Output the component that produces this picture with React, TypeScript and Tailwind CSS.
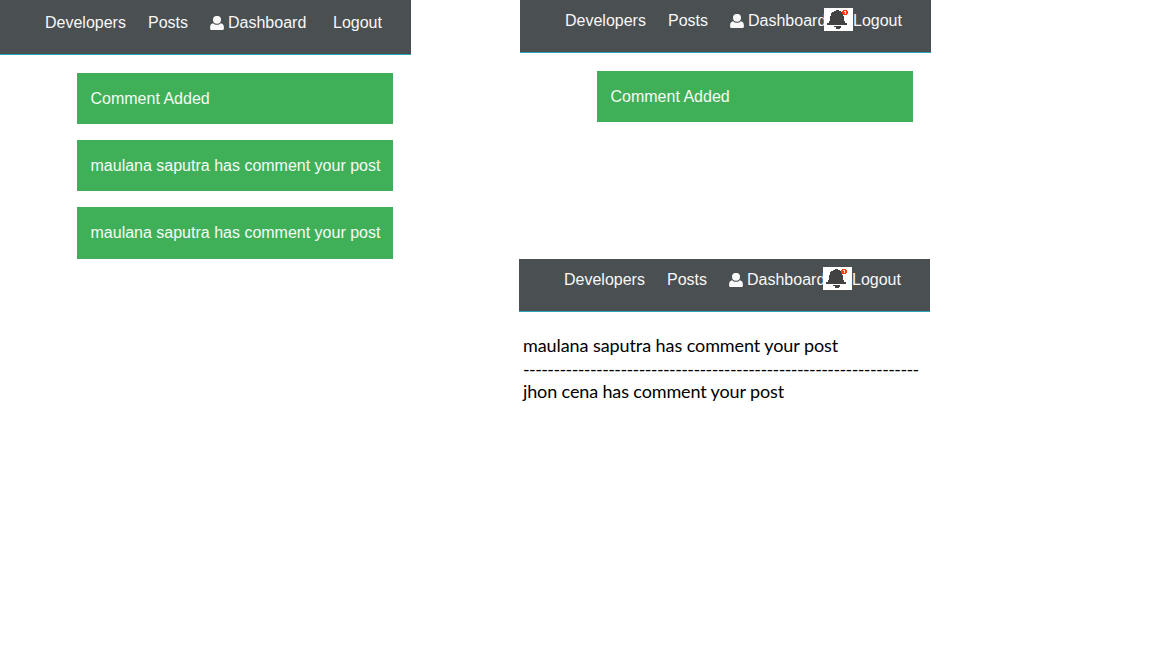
import React from "react";

function UserIcon() {
  return (
    <svg className="mr-1 mb-px h-[14px] w-[14px] shrink-0" viewBox="0 0 14 14" fill="currentColor" aria-hidden="true">
      <ellipse cx="7" cy="3.8" rx="4" ry="3.9" />
      <path d="M3.2 7.2C4.2 8.3 5.5 8.8 7 8.8S9.8 8.3 10.8 7.2C12.8 7.5 13.9 9 13.9 11.2V12.4C13.9 13.4 13.3 14 12.3 14H1.7C.7 14 .1 13.4 .1 12.4V11.2C.1 9 1.2 7.5 3.2 7.2Z" />
    </svg>
  );
}

function BellBadge() {
  return (
    <div className="absolute top-2 left-[304px] h-[23px] w-[29px] bg-white">
      <svg className="block h-[23px] w-[29px]" viewBox="0 0 29 23" shapeRendering="crispEdges" aria-hidden="true">
        <path
          fill="#424242"
          d="M12 2H15V3H17V4H18V5H19V8H20V13H21V15H23V17H3V15H5V13H6V8H7V5H8V4H10V3H12ZM10 18H17V20H16V21H12V19H10Z"
        />
        <path fill="#f4400c" d="M19 2H23V3H24V6H23V7H19V6H18V3H19Z" />
        <path fill="#ffe0d2" d="M20 3H22V6H21V4H20Z" />
      </svg>
    </div>
  );
}

function Navbar({ bell = false, compact = false }: { bell?: boolean; compact?: boolean }) {
  return (
    <nav
      className={`relative flex w-[411px] shrink-0 items-start border-b border-[#2aa5b8] bg-[#4a4f52] pl-[45px] text-base leading-6 text-[#f8f8f8] ${
        compact ? "h-[53px] pt-[9px]" : "h-[55px] pt-[11px]"
      }`}
    >
      <span className="w-[103px]">Developers</span>
      <span className="w-[62px]">Posts</span>
      <span className="flex w-[123px] items-center">
        <UserIcon />
        Dashboard
      </span>
      <span>Logout</span>
      {bell && <BellBadge />}
    </nav>
  );
}

function Alert({ children, tall = false }: { children: React.ReactNode; tall?: boolean }) {
  return (
    <div
      className={`ml-[77px] w-[316px] bg-[#40b058] pt-3.5 pl-[13.5px] text-base leading-6 whitespace-nowrap text-[#f5fbf6] ${
        tall ? "h-[52px]" : "h-[51px]"
      }`}
    >
      {children}
    </div>
  );
}

export default function App() {
  return (
    <main className="flex h-[648px] w-[1152px] items-start overflow-hidden bg-white font-['Liberation_Sans',sans-serif]">
      <section className="w-[411px]">
        <Navbar />
        <div className="flex flex-col gap-4 pt-[18px]">
          <Alert>Comment Added</Alert>
          <Alert>maulana saputra has comment your post</Alert>
          <Alert tall>maulana saputra has comment your post</Alert>
        </div>
      </section>
      <div className="ml-[108px] w-[412px]">
        <section className="h-[259px] pl-px">
          <Navbar bell compact />
          <div className="pt-[18px]">
            <Alert>Comment Added</Alert>
          </div>
        </section>
        <section>
          <Navbar bell compact />
          <div className="pt-[22px] pl-1 font-[Lato,sans-serif] text-[18px] leading-[23px] tracking-[-0.08px] whitespace-nowrap text-black">
            <p>maulana saputra has comment your post</p>
            <p className="h-[23px] pt-px tracking-[-0.6px]">-----------------------------------------------------------------</p>
            <p className="tracking-[-0.13px]">jhon cena has comment your post</p>
          </div>
        </section>
      </div>
    </main>
  );
}
